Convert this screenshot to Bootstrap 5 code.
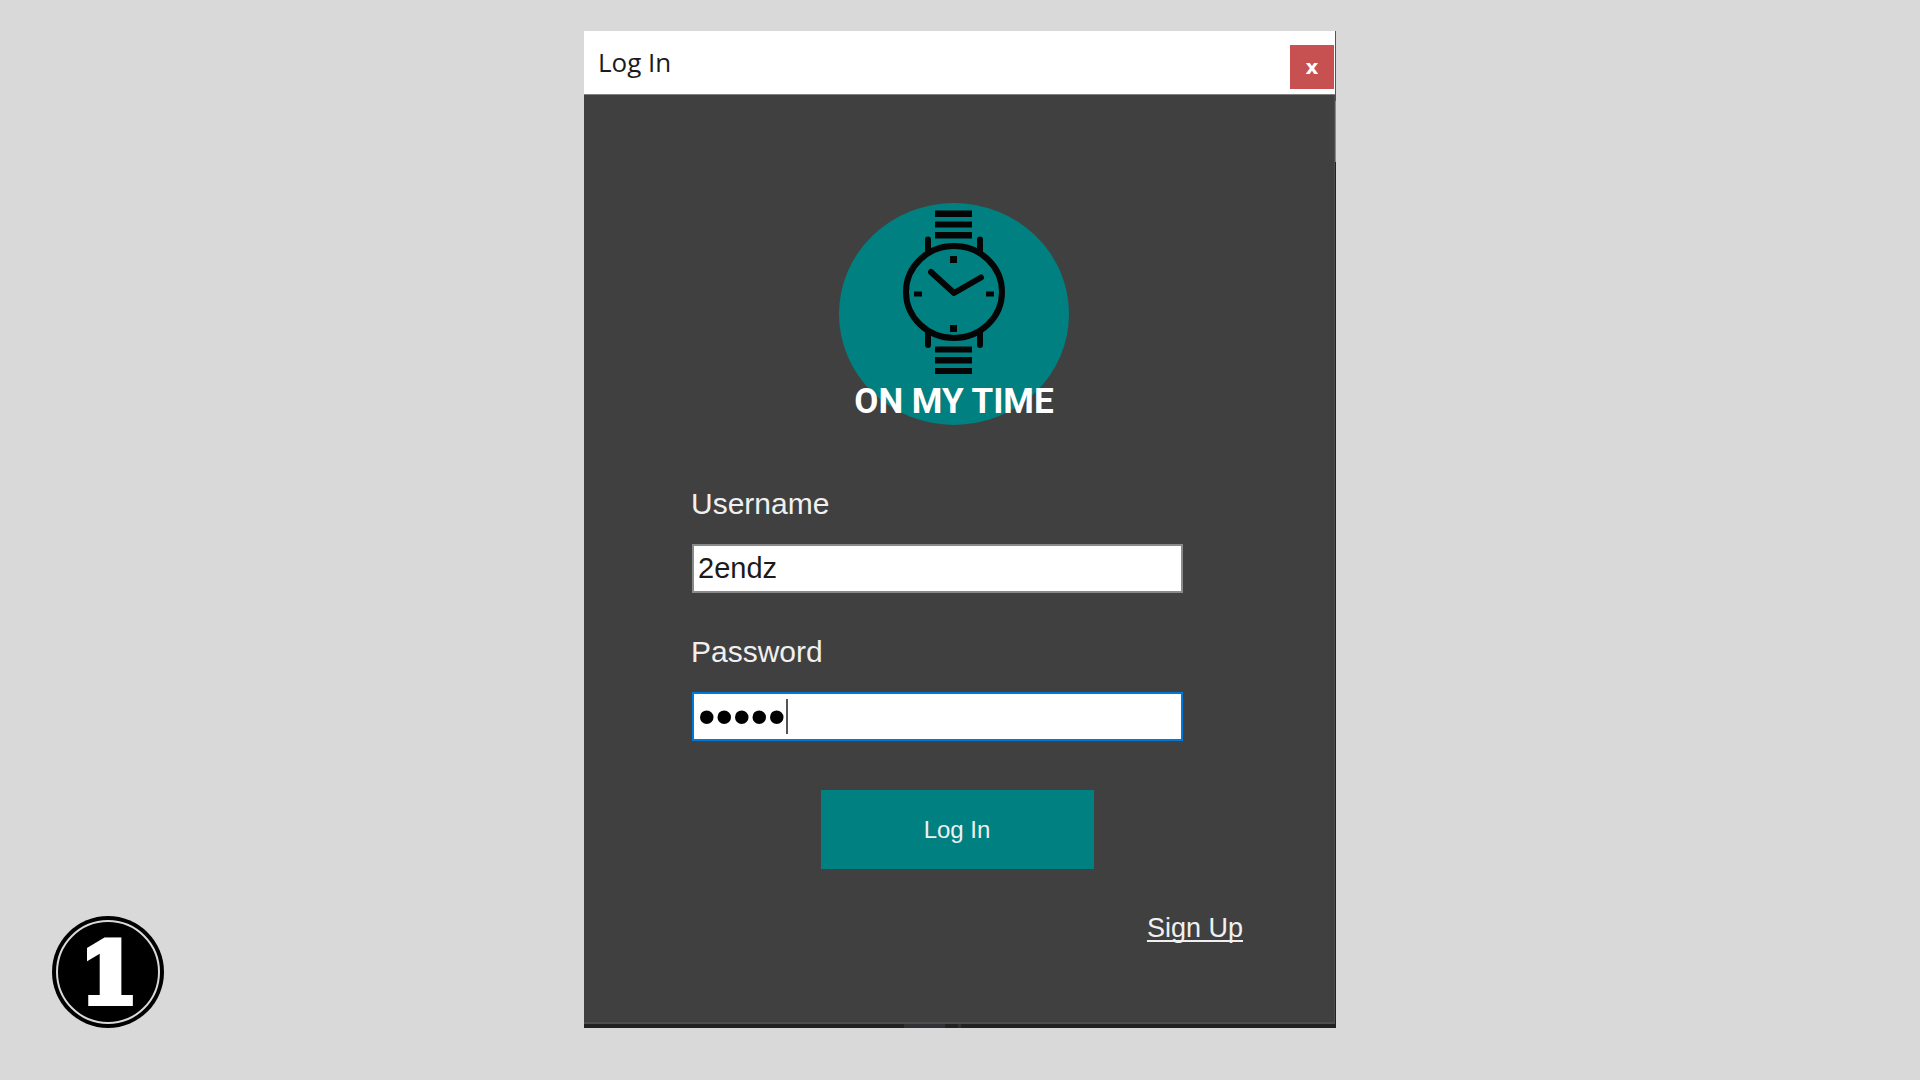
<!DOCTYPE html>
<html lang="en">
<head>
<meta charset="utf-8">
<meta name="viewport" content="width=device-width, initial-scale=1">
<title>Log In</title>
<link href="https://cdn.jsdelivr.net/npm/bootstrap@5.3.0/dist/css/bootstrap.min.css" rel="stylesheet">
<style>
body { background: #d9d9d9; font-family: "Liberation Sans", sans-serif; }
.stage { padding: 31px 0 51px; }
.login-window {
  max-width: 752px; padding: 0 1px 4px 0;
  background:
    linear-gradient(90deg, #222 320px, #323236 320px 361px, #222 361px 374px, #323236 374px 377px, #222 377px) bottom / 100% 4px no-repeat,
    linear-gradient(#555 64px, #1f5f8f 64px 70px, #8c8a72 70px 131px, #222 131px) right / 1px 100% no-repeat,
    #404040;
}
.title-bar { height: 64px; background: #fff; border-bottom: 1px solid #808080; padding: 0 1px 0 14px; }
.window-title { font: 26px/32px "Open Sans", sans-serif; color: #1b1b1b; padding-bottom: 2px; }
.close-btn { width: 44px; height: 44px; margin-top: 8px; background: #c75050; color: #fff; font: bold 20px/24px "DejaVu Sans", sans-serif; }
.close-btn:hover { background: #d96060; color: #fff; }
.window-body { background: #404040; padding: 108px 0 78px; border-bottom: 2px solid #4e4e4e; border-right: 1px solid #4e4e4e; }
.brand { padding-right: 10px; margin-bottom: 61px; }
.brand svg { width: 230px; height: 222px; }
.brand text { font: bold 35px Roboto, sans-serif; }
.fields { padding: 0 151px 0 108px; gap: 41px; }
.field-label { font-size: 30px; line-height: 36px; margin: 0 0 22px -1px; color: #f0f0f0; }
.text-field { height: 49px; padding: 0 4px; border: 2px solid #8a8a8a; font-size: 29px; line-height: 36px; color: #1b1b1b; }
.secret-field, .secret-field:focus { border-color: #0078d7; font-size: 50px; color: #000; box-shadow: none; caret-color: transparent; }
.caret { left: 94px; top: 7px; width: 2px; height: 35px; background: #555; }
.submit-btn { width: 273px; height: 79px; margin-top: 49px; background: #008080; color: #f0f0f0; font-size: 24px; }
.submit-btn:hover { background: #009090; color: #fff; }
.signup { padding-right: 91px; margin-top: 43px; font-size: 27px; line-height: 32px; }
.signup a { color: #f0f0f0; text-decoration-thickness: 2px; text-underline-offset: 3px; text-decoration-skip-ink: none; }
.step-badge { left: 52px; bottom: 52px; width: 112px; height: 112px; }
.step-badge text { font: bold 84px "DejaVu Serif", serif; }
</style>
<script src="https://cdn.jsdelivr.net/npm/bootstrap@5.3.0/dist/js/bootstrap.bundle.min.js" defer></script>
</head>
<body>
<main class="stage min-vh-100 d-flex justify-content-center align-items-start">
  <section class="login-window w-100">
    <header class="title-bar d-flex justify-content-between align-items-center">
      <h1 class="window-title m-0">Log In</h1>
      <button type="button" class="close-btn btn rounded-0 border-0 p-0" aria-label="Close">x</button>
    </header>
    <form class="window-body">
      <div class="brand d-flex justify-content-center">
        <svg viewBox="0 0 230 222" role="img" aria-label="On My Time">
          <ellipse cx="115" cy="111" rx="115" ry="111" fill="#008080"/>
          <g fill="#050505">
            <path d="M96 7.500h37v6.500h-37zM96 18.500h37v6h-37zM96 29h37v6.500h-37zM96 143.500h37v6h-37zM96 154h37v6.500h-37zM96 165h37v6h-37z"/>
            <path d="M111 53h7v7h-7zM111 122h7v7h-7zM75 88.500h8v5h-8zM147 88.500h8v5h-8z"/>
          </g>
          <g fill="none" stroke="#050505" stroke-width="6" stroke-linecap="round">
            <ellipse cx="115" cy="89" rx="48" ry="46"/>
            <path d="M89 36.500V48M141 36.500V48M89 130v12M141 130v12"/>
            <path d="M92 69l23 21 27-15.500" stroke-linejoin="round"/>
          </g>
          <text x="115" y="210" text-anchor="middle" fill="#fff">ON MY TIME</text>
        </svg>
      </div>
      <div class="fields d-flex flex-column">
        <div>
          <label class="field-label d-block" for="username">Username</label>
          <input class="text-field form-control rounded-0" id="username" type="text" value="2endz">
        </div>
        <div>
          <label class="field-label d-block" for="password">Password</label>
          <div class="position-relative">
            <input class="text-field secret-field form-control rounded-0" id="password" type="password" value="12345">
            <span class="caret position-absolute" aria-hidden="true"></span>
          </div>
        </div>
      </div>
      <div class="d-flex justify-content-center pe-1">
        <button type="submit" class="submit-btn btn rounded-0 border-0">Log In</button>
      </div>
      <div class="signup text-end"><a href="#signup">Sign Up</a></div>
    </form>
  </section>
</main>
<svg class="step-badge position-fixed" viewBox="0 0 112 112" role="img" aria-label="Step 1">
  <circle cx="56" cy="56" r="56"/>
  <circle cx="56" cy="56" r="51" fill="none" stroke="#d9d9d9" stroke-width="2"/>
  <text x="57" y="87" text-anchor="middle" fill="#fff" stroke="#fff" stroke-width="6">1</text>
</svg>
</body>
</html>
